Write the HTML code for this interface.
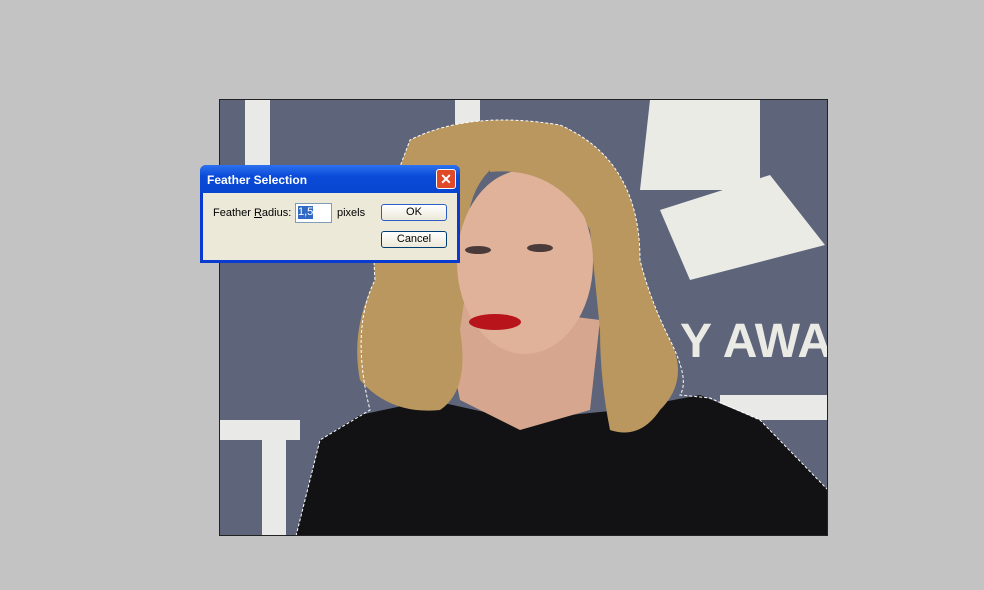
<!DOCTYPE html>
<html><head><style>
body{margin:0;width:984px;height:590px;background:#c3c3c3;position:relative;overflow:hidden;font-family:Tahoma,"Liberation Sans",sans-serif}
svg{position:absolute;left:0;top:0}
.dlg{position:absolute;left:200px;top:165px;width:260px;height:98px;background:#0a3bd0;border-radius:6px 6px 0 0;box-sizing:border-box}
.tb{position:absolute;left:0;top:0;width:260px;height:28px;background:linear-gradient(#2d72f0,#0a4ad8 40%,#0846d0);border-radius:6px 6px 0 0;color:#fff;font-weight:bold;font-size:12px;line-height:30px;padding-left:7px;box-sizing:border-box}
.x{position:absolute;right:4px;top:4px;width:20px;height:20px;background:#e04a28;border:1px solid #fff;border-radius:3px;color:#fff;font-size:14px;line-height:18px;text-align:center;box-sizing:border-box;font-weight:bold}
.body{position:absolute;left:3px;top:28px;width:254px;height:67px;background:#ece9d8}
.lbl{position:absolute;left:10px;top:14px;font-size:11px;color:#000}
.inp{position:absolute;left:92px;top:10px;width:37px;height:20px;background:#fff;border:1px solid #7f9db9;box-sizing:border-box;font-size:11px}
.inp span{background:#316ac5;color:#fff;margin:2px;display:inline-block;line-height:13px}
.px{position:absolute;left:134px;top:14px;font-size:11px}
.btn{position:absolute;left:178px;width:66px;height:17px;border:1px solid #003c74;border-radius:3px;background:linear-gradient(#fff,#ece9d8);font-size:11px;text-align:center;line-height:15px;box-sizing:border-box}
</style></head><body>
<svg width="984" height="590" viewBox="0 0 984 590">
<defs><clipPath id="c"><rect x="220" y="100" width="608" height="436"/></clipPath></defs>
<g clip-path="url(#c)">
<rect x="220" y="100" width="608" height="436" fill="#5e6479"/>
<rect x="245" y="100" width="25" height="80" fill="#e9e9e7"/>
<rect x="455" y="100" width="25" height="30" fill="#e9e9e7"/>
<rect x="220" y="420" width="80" height="20" fill="#e9e9e7"/>
<rect x="262" y="420" width="24" height="116" fill="#e9e9e7"/>
<path d="M650 100 L760 100 L760 190 L640 190 Z" fill="#ebebe6"/>
<path d="M660 210 L770 175 L825 245 L690 280 Z" fill="#ebebe6"/>
<text x="680" y="357" fill="#ebebe6" font-family="Liberation Sans" font-weight="bold" font-size="48">Y AWA</text>
<rect x="720" y="395" width="110" height="25" fill="#e9e9e7"/>
<path d="M296 536 L320 440 L360 415 L430 400 L520 420 L620 410 L700 395 L760 420 L828 490 L828 536 Z" fill="#121214"/>
<path d="M440 300 L460 400 L520 430 L590 410 L600 320 Z" fill="#d6a68e"/>
<path d="M410 140 Q470 110 560 125 Q640 160 640 260 Q650 300 670 340 Q690 380 660 410 Q640 440 610 430 Q600 380 600 330 L590 230 Q560 170 490 170 Q460 200 470 260 L460 330 Q470 390 440 410 Q390 415 360 380 Q350 330 375 280 Q370 220 395 180 Z" fill="#b9975e"/>
<ellipse cx="525" cy="262" rx="68" ry="92" fill="#e0b29a"/>
<path d="M490 172 Q560 165 595 235 L600 200 Q565 155 490 165 Z" fill="#b9975e"/>
<ellipse cx="495" cy="322" rx="26" ry="8" fill="#b8141c"/>
<ellipse cx="478" cy="250" rx="13" ry="4" fill="#4a3a3a"/>
<ellipse cx="540" cy="248" rx="13" ry="4" fill="#4a3a3a"/>
<path d="M296 536 L320 440 L370 410 Q350 330 375 280 Q370 220 395 180 L410 140 Q470 110 560 125 Q640 160 640 260 Q650 300 670 340 Q690 380 680 395 L710 398 L760 420 L828 490" fill="none" stroke="#fff" stroke-width="1" stroke-dasharray="3,2"/>
</g>
<rect x="219.5" y="99.5" width="608" height="436" fill="none" stroke="#222" stroke-width="1"/>
</svg>
<div class="dlg">
<div class="tb">Feather Selection<div class="x">✕</div></div>
<div class="body">
<div class="lbl">Feather <u>R</u>adius:</div>
<div class="inp"><span>1,5</span></div>
<div class="px">pixels</div>
<div class="btn" style="top:11px;border-color:#2c5ec8">OK</div>
<div class="btn" style="top:38px">Cancel</div>
</div></div>
</body></html>
